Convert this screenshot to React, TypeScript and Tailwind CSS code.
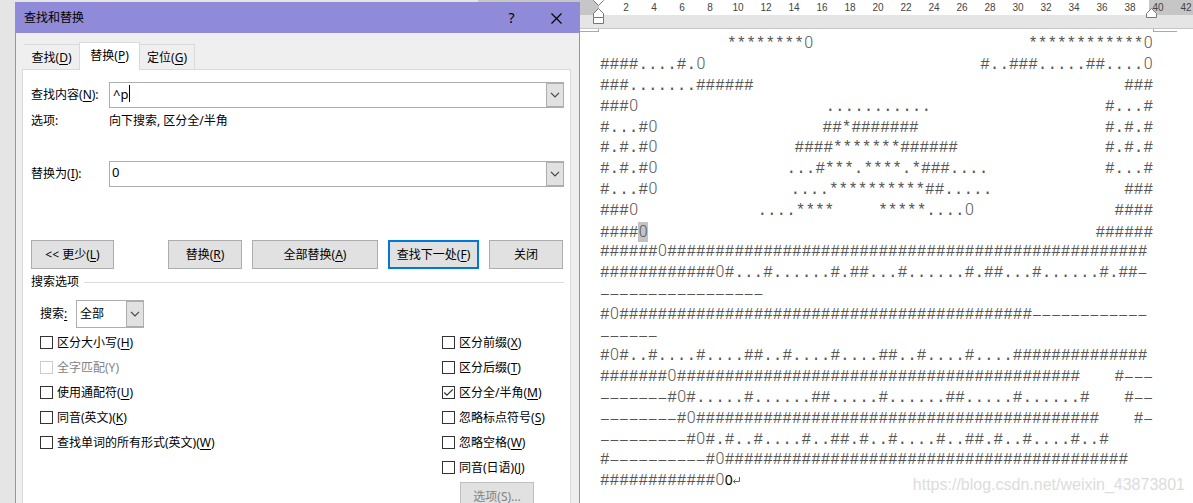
import type { ReactNode } from "react"
import clsx from "clsx"

interface DocLine {
  left?: string
  // [margin-left class, text]
  middle?: [string, string][]
  right?: string
  selected?: boolean
}

const docLines: DocLine[] = [
  { middle: [["ml-[127px]", "********0"]], right: "************0" },
  { left: "####....#.0", right: "#..###.....##....0" },
  { left: "###.......######", right: "###" },
  { left: "###0", middle: [["ml-[187px]", "..........."]], right: "#...#" },
  { left: "#...#0", middle: [["ml-[165px]", "##*#######"]], right: "#.#.#" },
  { left: "#.#.#0", middle: [["ml-[137px]", "####*******######"]], right: "#.#.#" },
  { left: "#.#.#0", middle: [["ml-[129px]", "...#***.****.*###...."]], right: "#...#" },
  { left: "#...#0", middle: [["ml-[133px]", "....**********##....."]], right: "###" },
  { left: "###0", middle: [["ml-[119px]", "....****"], ["ml-[44px]", "*****....0"]], right: "####" },
  { left: "####0", right: "######", selected: true },
  { left: "######0" + "#".repeat(50) },
  { left: "############0#...#......#.##...#......#.##...#......#.##–" },
  { left: "–".repeat(17) },
  { left: "#0" + "#".repeat(43) + "–".repeat(12) },
  { left: "–".repeat(6) },
  { left: "#0#..#....#....##..#....#....##..#....#....##############" },
  { left: "#######0" + "#".repeat(42), right: "#–––" },
  { left: "–––––––#0#.....#......##.....#......##.....#......#", right: "#––" },
  { left: "––––––––#0" + "#".repeat(42), right: "#–" },
  { left: "–––––––––#0#.#..#....#..##.#..#....#..##.#..#....#..#" },
  { left: "#––––––––––#0" + "#".repeat(42) },
]

const rulerMarks = Array.from({ length: 21 }, (_, i) => (i + 1) * 2)

function Glyphs({ text, selected }: { text: string; selected?: boolean }) {
  return (
    <span className="whitespace-pre">
      {text.split(/([0–])/).map((part, i) => {
        if (part === "0") {
          return (
            <span
              key={i}
              className={clsx("inline-flex w-[1ch] justify-center leading-none", selected && "bg-[#c3c3c3] py-0.5")}
            >
              <span className="font-['Roboto',sans-serif] font-light">0</span>
            </span>
          )
        }
        if (part === "–") {
          return (
            <span key={i} className="inline-flex w-[1ch] justify-center leading-none">
              <span className="font-['Liberation_Sans',sans-serif] text-sm leading-none">–</span>
            </span>
          )
        }
        return part
      })}
    </span>
  )
}

function Chevron() {
  return (
    <svg width="10" height="6" viewBox="0 0 10 6" fill="none" stroke="#444" strokeWidth="1.2">
      <path d="M1 .8 5 4.8 9 .8" />
    </svg>
  )
}

function Key({ children }: { children: string }) {
  return (
    <>
      (<u className="underline-offset-2">{children}</u>)
    </>
  )
}

function Tab({ active, children }: { active?: boolean; children: ReactNode }) {
  return (
    <button
      role="tab"
      aria-selected={!!active}
      className={clsx(
        "border-t border-[#d9d9d9]",
        active ? "-mb-px h-7 w-[61px] border-x bg-white pb-px" : "h-[25px] w-[55px] pt-px last:border-r",
      )}
    >
      {children}
    </button>
  )
}

function Combo({ id, value, caret }: { id: string; value: string; caret?: boolean }) {
  return (
    <div className="relative flex h-[26px] flex-1 border border-[#adadb3] bg-white">
      <input
        id={id}
        defaultValue={value}
        className={clsx("min-w-0 flex-1 text-[13px] outline-none", caret ? "px-[3px]" : "px-0.5 pb-0.5")}
      />
      {caret && <span className="absolute top-0.5 left-[19px] h-[17px] w-px bg-black" />}
      <button
        aria-label="展开"
        className="flex w-[17px] items-center justify-center border border-r-0 border-[#adadad] bg-[#e1e1e1]"
      >
        <Chevron />
      </button>
    </div>
  )
}

function Check({ children, checked, disabled }: { children: ReactNode; checked?: boolean; disabled?: boolean }) {
  return (
    <label className={clsx("relative flex h-[25px] items-center gap-1", disabled && "text-[#838383]")}>
      <input
        type="checkbox"
        defaultChecked={checked}
        disabled={disabled}
        className="peer size-[13px] appearance-none border border-[#333] bg-white disabled:border-[#ccc]"
      />
      <svg
        className="absolute left-0 hidden size-[13px] peer-checked:block"
        viewBox="0 0 13 13"
        fill="none"
        stroke="#333"
        strokeWidth="1.3"
      >
        <path d="M2.3 6.5 5 9.2 10.8 3.4" />
      </svg>
      <span>{children}</span>
    </label>
  )
}

function Button({ className, children, disabled }: { className: string; children: ReactNode; disabled?: boolean }) {
  return (
    <button
      disabled={disabled}
      className={clsx("h-[29px] shrink-0 bg-[#e1e1e1] disabled:text-[#838383]", className)}
    >
      {children}
    </button>
  )
}

function FindReplaceDialog() {
  return (
    <section className="flex flex-1 flex-col border border-b-0 border-[#8f8bd8] bg-[#efefef]">
      <header className="flex h-[30px] shrink-0 items-center bg-[#8f8bd8] pl-2">
        <h1 className="flex-1">查找和替换</h1>
        <button aria-label="帮助" className="w-[45px] text-sm">
          ?
        </button>
        <button aria-label="关闭" className="flex w-[45px] justify-center">
          <svg width="11" height="11" viewBox="0 0 11 11" stroke="#000" strokeWidth="1.2">
            <path d="M.5 .5l10 10M10.5 .5l-10 10" />
          </svg>
        </button>
      </header>

      <div className="flex flex-1 flex-col pt-[9px] pr-2 pl-1.5">
        <div role="tablist" className="z-10 flex items-end pl-0.5">
          <Tab>
            查找
            <Key>D</Key>
          </Tab>
          <Tab active>
            替换
            <Key>P</Key>
          </Tab>
          <Tab>
            定位
            <Key>G</Key>
          </Tab>
        </div>

        <div className="flex-1 border border-b-0 border-[#d9d9d9] bg-white pt-3 pr-1.5 pl-2">
          <div className="flex items-center">
            <label htmlFor="find" className="w-[78px]">
              查找内容
              <Key>N</Key>:
            </label>
            <Combo id="find" value="^p" caret />
          </div>
          <div className="flex h-[26px] items-center">
            <span className="w-[78px]">选项:</span>
            <span>向下搜索, 区分全/半角</span>
          </div>
          <div className="mt-[27px] flex items-center">
            <label htmlFor="replace" className="w-[78px]">
              替换为
              <Key>I</Key>:
            </label>
            <Combo id="replace" value="0" />
          </div>

          <div className="mt-[53px] flex gap-2.5">
            <Button className="mr-11 w-[83px] border border-[#adadad]">
              &lt;&lt; 更少
              <Key>L</Key>
            </Button>
            <Button className="w-[74px] border border-[#adadad]">
              替换
              <Key>R</Key>
            </Button>
            <Button className="w-[126px] border border-[#adadad]">
              全部替换
              <Key>A</Key>
            </Button>
            <Button className="w-[91px] border-2 border-[#0078d7]">
              查找下一处
              <Key>F</Key>
            </Button>
            <Button className="w-[74px] border border-[#adadad]">关闭</Button>
          </div>

          <fieldset>
            <div className="flex h-[26px] items-center gap-[5px]">
              <span>搜索选项</span>
              <span className="h-px flex-1 bg-[#dcdcdc]" />
            </div>
            <div className="mt-[5px] flex items-center pl-[9px]">
              <label htmlFor="scope" className="w-9">
                搜索<u className="underline-offset-2">:</u>
              </label>
              <div className="relative h-7 w-[68px] border border-[#adadb3]">
                <select id="scope" className="size-full appearance-none pl-[3px] outline-none">
                  <option>全部</option>
                </select>
                <span className="pointer-events-none absolute inset-y-0 right-0 flex w-[17px] items-center justify-center border border-r-0 border-[#adadad] bg-[#e1e1e1]">
                  <Chevron />
                </span>
              </div>
            </div>

            <div className="mt-0.5 flex justify-between pr-[18px] pl-[9px]">
              <div>
                <Check>
                  区分大小写
                  <Key>H</Key>
                </Check>
                <Check disabled>全字匹配(Y)</Check>
                <Check>
                  使用通配符
                  <Key>U</Key>
                </Check>
                <Check>
                  同音(英文)
                  <Key>K</Key>
                </Check>
                <Check>
                  查找单词的所有形式(英文)
                  <Key>W</Key>
                </Check>
              </div>
              <div className="w-[104px]">
                <Check>
                  区分前缀
                  <Key>X</Key>
                </Check>
                <Check>
                  区分后缀
                  <Key>T</Key>
                </Check>
                <Check checked>
                  区分全/半角
                  <Key>M</Key>
                </Check>
                <Check>
                  忽略标点符号
                  <Key>S</Key>
                </Check>
                <Check>
                  忽略空格
                  <Key>W</Key>
                </Check>
                <Check>
                  同音(日语)
                  <Key>J</Key>
                </Check>
                <Button disabled className="mt-0.5 ml-[18px] w-[74px] border border-[#bfbfbf]">
                  选项(S)...
                </Button>
              </div>
            </div>
          </fieldset>
        </div>
      </div>
    </section>
  )
}

function Ruler() {
  return (
    <div className="relative shrink-0 border-b border-[#c6c6c6] bg-[#e5e5e5] pb-[13px]">
      <div className="flex h-[15px] bg-[#c6c6c6] pl-[19px]">
        <div className="w-[550px] bg-white pl-[13px]">
          <div className="flex items-center font-['Liberation_Sans',sans-serif] text-[10px] leading-[15px] text-[#444]">
            {rulerMarks.map((n) => (
              <span key={n} className="w-7 shrink-0 text-center">
                {n}
              </span>
            ))}
          </div>
        </div>
      </div>
      {/* indent handles */}
      <svg className="absolute top-0 left-[13px]" width="11" height="24" fill="#fff" stroke="#777">
        <path d="M.5 -.5h10v1L5.5 5.5.5 .5z" />
        <path d="M.5 17.5v-4l5-5 5 5v4z" />
        <path d="M.5 17.5h10v6h-10z" />
      </svg>
      <svg className="absolute top-2 left-[566px]" width="11" height="10" fill="#fff" stroke="#777">
        <path d="M.5 9.5v-4l5-5 5 5v4z" />
      </svg>
    </div>
  )
}

function Document() {
  return (
    <main className="flex min-w-0 flex-1 flex-col overflow-hidden bg-white">
      <Ruler />
      {/* page corner marks */}
      <div className="flex h-[3px] shrink-0 gap-[554px]">
        <span className="w-[19px] shrink-0 border-r border-b border-[#aaa]" />
        <span className="w-6 shrink-0 border-b border-l border-[#aaa]" />
      </div>
      <div className="ml-5 w-[553px] pt-0.5 font-['Liberation_Mono',monospace] text-base leading-[21px] text-[#555]">
        {docLines.map((line, i) => (
          <div key={i} className="flex h-[21px] items-baseline nth-[5n]:h-5">
            {line.left && <Glyphs text={line.left} selected={line.selected} />}
            {line.middle?.map(([margin, text]) => (
              <span key={text} className={margin}>
                <Glyphs text={text} />
              </span>
            ))}
            {line.right && (
              <span className="ml-auto">
                <Glyphs text={line.right} />
              </span>
            )}
          </div>
        ))}
        <div className="flex h-[21px] items-baseline">
          <Glyphs text="############0" />
          <span className="font-['Noto_Sans',sans-serif] text-sm leading-none text-black">0</span>
          <svg width="7" height="8" viewBox="0 0 7 8" fill="none" stroke="#666">
            <path d="M6.5 0v4.5h-6M2.5 2.5l-2 2 2 2" />
          </svg>
        </div>
      </div>
    </main>
  )
}

export default function App() {
  return (
    <div className="relative flex h-screen overflow-hidden bg-[#e5e5e5] font-['Noto_Sans','Noto_Sans_CJK_SC',sans-serif] text-xs text-black">
      <div className="flex w-[580px] shrink-0 flex-col pl-[15px]">
        <div className="h-0.5 w-[102px] shrink-0 self-end bg-[#c6c6c6]" />
        <FindReplaceDialog />
      </div>
      <Document />
      <p className="absolute right-2 bottom-1.5 font-['Liberation_Sans',sans-serif] text-base text-[#dcdcdc]">
        https://blog.csdn.net/weixin_43873801
      </p>
    </div>
  )
}
